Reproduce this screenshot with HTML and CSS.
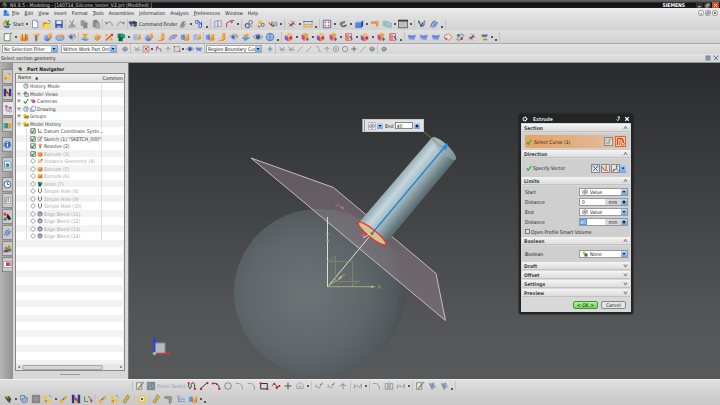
FILE: index.html
```html
<!DOCTYPE html>
<html lang="en">
<head>
<meta charset="utf-8">
<title>NX 8.5 - Modeling</title>
<link rel="stylesheet" href="styles.css">
</head>
<body>
<svg class="sprite" aria-hidden="true">
<defs>
<linearGradient id="gB" x1="0" x2="1" y2="1"><stop stop-color="#b9d2ff"/><stop offset="1" stop-color="#2350c8"/></linearGradient>
<linearGradient id="gO" x1="0" x2="1" y2="1"><stop stop-color="#ffe09a"/><stop offset="1" stop-color="#e0690a"/></linearGradient>
</defs>
<symbol id="logo" viewBox="0 0 12 12"><circle cx="5" cy="4" r="2.6" fill="#2b67d8"/><path d="M2 10V7l4-1 5 2v2z" fill="#3d7be6"/><path d="M7 3l3 1v3l-3-1z" fill="#8bb4ff"/></symbol>
<symbol id="swirl" viewBox="0 0 12 12"><path d="M6 2a4 4 0 0 0-4 5" fill="none" stroke="#e8a020" stroke-width="2"/><path d="M2.500 8a4 4 0 0 0 6 1" fill="none" stroke="#2a5fc8" stroke-width="2"/><path d="M4 4l5-3-1 4 3 2-5 2z" fill="#2d9c4a"/><circle cx="6" cy="6" r="1.300" fill="#d8382a"/></symbol>
<symbol id="new" viewBox="0 0 12 12"><path d="M3 1.500h4.500l2 2v7H3z" fill="#fff" stroke="#7888b8"/><path d="M7.500 1.500v2h2" fill="none" stroke="#7888b8"/></symbol>
<symbol id="open" viewBox="0 0 12 12"><path d="M1 4h4l1 1h4v5H1z" fill="#d8960e"/><path d="M3 6h8l-2 5H1z" fill="#ffd45a"/><path d="M7 1.500q3 0 3 2.500" fill="none" stroke="#5878c8"/></symbol>
<symbol id="save" viewBox="0 0 12 12"><path d="M1.500 1.500h9v9h-9z" fill="#3c56a8"/><path d="M3 2h6v4H3z" fill="#dde6fa"/><path d="M4 8h4v2.500H4z" fill="#a8b4d8"/></symbol>
<symbol id="cut" viewBox="0 0 12 12"><path d="M8 1L5 8M3 2l4 5" stroke="#8c8c8c" stroke-width="1.200"/><circle cx="4" cy="9" r="1.500" fill="none" stroke="#777"/><circle cx="8" cy="8.500" r="1.500" fill="none" stroke="#777"/></symbol>
<symbol id="copy" viewBox="0 0 12 12"><path d="M2 1.500h5v7H2z" fill="#999"/><path d="M5 4h5v7H5z" fill="#888" stroke="#aaa" stroke-width=".5"/></symbol>
<symbol id="paste" viewBox="0 0 12 12"><path d="M2 2h7v8H2z" fill="#8f8f8f"/><path d="M4 1h3v2H4z" fill="#777"/><path d="M5.500 5h5v6h-5z" fill="#a8a8a8" stroke="#888" stroke-width=".5"/></symbol>
<symbol id="undo" viewBox="0 0 12 12"><path d="M3 5q6-4 7 3" fill="none" stroke="#8d8d8d" stroke-width="1.200"/><path d="M1 3l1 4 3-2z" fill="#8d8d8d"/></symbol>
<symbol id="redo" viewBox="0 0 12 12"><path d="M9 5Q3 1 2 8" fill="none" stroke="#8d8d8d" stroke-width="1.200"/><path d="M11 3l-1 4-3-2z" fill="#8d8d8d"/></symbol>
<symbol id="bino" viewBox="0 0 12 12"><path d="M1 3h5l1-1 4 2-1 4-2 1-1-3-3 1-3-2z" fill="#3c424c"/><circle cx="4" cy="7" r="2" fill="#5c7ca8"/><circle cx="8.500" cy="7.500" r="2" fill="#4a5868"/></symbol>
<symbol id="mac" viewBox="0 0 12 12"><path d="M2 10l2-6 3-2 2 1-2 3 3-1-2 4-2 2z" fill="#a0a098"/><path d="M4 9l3-5" stroke="#666"/></symbol>
<symbol id="info" viewBox="0 0 12 12"><path d="M2 2h3v3H2zM6 6h3v4H6z" fill="#fff" stroke="#2a48c8"/><path d="M5 2l3 4M9 3v6" stroke="#2a48c8"/></symbol>
<symbol id="pages" viewBox="0 0 12 12"><path d="M2 3l4-1v7l-4 1z" fill="#d0e4f0" stroke="#6c90a8" stroke-width=".8"/><path d="M6 2h4v7H6z" fill="#e8dce8" stroke="#9a80a0" stroke-width=".8"/></symbol>
<symbol id="meas" viewBox="0 0 12 12"><path d="M2 10V5l5-3h4" fill="none" stroke="#d03a28" stroke-width="1.200"/><circle cx="8" cy="4" r="1.200" fill="#4068c8"/></symbol>
<symbol id="loops" viewBox="0 0 12 12"><circle cx="4" cy="8" r="2.500" fill="none" stroke="#3d66c0" stroke-width="1.300"/><circle cx="8" cy="4" r="2.200" fill="none" stroke="#7a88b0" stroke-width="1.300"/><path d="M7 6l3 4" stroke="#e8a030" stroke-width="1.500"/></symbol>
<symbol id="gear" viewBox="0 0 12 12"><circle cx="5" cy="4" r="2.500" fill="#f0c030"/><circle cx="8" cy="7" r="2.500" fill="#6884b8"/><circle cx="8" cy="7" r="1" fill="#fff"/><path d="M2 8l3 2" stroke="#d05a28" stroke-width="1.500"/></symbol>
<symbol id="rgb" viewBox="0 0 12 12"><path d="M1 4l3 4 1-5" fill="none" stroke="#d02a2a" stroke-width="1.200"/><circle cx="6" cy="8" r="1.500" fill="#30a040"/><circle cx="9" cy="6" r="2" fill="none" stroke="#506cb8"/></symbol>
<symbol id="dim" viewBox="0 0 12 12"><path d="M2 9l7-6M2 5l5 5M5 2l5 5" stroke="#c84858"/><path d="M4 8l4-3" stroke="#4c58a8" stroke-width="2"/></symbol>
<symbol id="rule" viewBox="0 0 12 12"><path d="M1 3h10M1 2v3M11 2v3" stroke="#5468a8"/><path d="M1 6.500h10v3H1z" fill="#f0cf8a" stroke="#b88838" stroke-width=".7"/></symbol>
<symbol id="fit" viewBox="0 0 12 12"><path d="M1.500 1.500h9v9h-9z" fill="#f4f4ff" stroke="#405cb8"/><path d="M3 3h2v2H3zM7 3h2v2H7zM3 7h2v2H3zM7 7h2v2H7z" fill="#d86a28"/></symbol>
<symbol id="orient" viewBox="0 0 12 12"><path d="M2 7q0-4 4-4l3-1-1 3q-4 0-3 4z" fill="#777"/><path d="M4 8q4 2 6-1" fill="none" stroke="#666" stroke-width="2"/></symbol>
<symbol id="cube" viewBox="0 0 12 12"><path d="M1.500 4L4 1.500h7L8.500 4z" fill="#b8ccff"/><path d="M1.500 4h7v7h-7z" fill="#5c84e0"/><path d="M8.500 4L11 1.500V8l-2.500 3z" fill="#2848a8"/></symbol>
<symbol id="plate" viewBox="0 0 12 12"><path d="M1 3l9-1v6L7 10V6L1 6z" fill="#e09a58"/></symbol>
<symbol id="clip" viewBox="0 0 12 12"><path d="M1 2l7 3v6L1 8z" fill="#8cc8a8"/><path d="M3 2l8 3v5L8 9" fill="#a8c4e8" stroke="#6890b8" stroke-width=".7"/></symbol>
<symbol id="win" viewBox="0 0 12 12"><path d="M.5 1.500h11v9H.5z" fill="#bdbfb8" stroke="#555"/><path d="M0 1h12v2H0z" fill="#3c3c3c"/></symbol>
<symbol id="sheet" viewBox="0 0 12 12"><path d="M1.500 2h6l3-1-2 2v7.500h-7z" fill="#fff" stroke="#587858"/></symbol>
<symbol id="wcs" viewBox="0 0 12 12"><path d="M5 4l5 1-2 4-4 1z" fill="url(#gB)"/><path d="M2 2l3 7 2-5" fill="none" stroke="#333"/><path d="M2 2v3" stroke="#20a040" stroke-width="1.500"/><path d="M8 2h2v2H8z" fill="#d84040"/></symbol>
<symbol id="wcs2" viewBox="0 0 12 12"><path d="M4 2l7 2-3 5-4 2z" fill="url(#gB)"/><path d="M2 10l2-6 4-2" fill="none" stroke="#555"/></symbol>
<symbol id="extr" viewBox="0 0 12 12"><path d="M1 3l5-1 5 1v7l-5 1-5-1z" fill="url(#gO)"/><path d="M4 2.500v8M8 2.500v8" stroke="#b84c08"/><path d="M6 1v5" stroke="#fff2a0"/></symbol>
<symbol id="rev" viewBox="0 0 12 12"><path d="M1 3q5-3 10 0L8 6v4H5V6z" fill="url(#gO)"/><path d="M6 4v7" stroke="#3858c0" stroke-width="1.500"/></symbol>
<symbol id="blk" viewBox="0 0 12 12"><circle cx="5" cy="7" r="4" fill="url(#gB)"/><path d="M5 2l5-1 1 6-4 2z" fill="url(#gO)"/></symbol>
<symbol id="dsc" viewBox="0 0 12 12"><ellipse cx="6" cy="7" rx="5" ry="3.500" fill="#8fb0e8" stroke="#5070b0" stroke-width=".6"/><path d="M3 5l4-3 4 2-3 3z" fill="url(#gO)"/></symbol>
<symbol id="hole" viewBox="0 0 12 12"><path d="M1 5l5-3 5 4-5 4z" fill="#b4cce8" stroke="#6888a8" stroke-width=".6"/><circle cx="5" cy="6" r="2" fill="#3f64b8"/><path d="M7 5l2-3 2 3z" fill="#e88828"/></symbol>
<symbol id="datum" viewBox="0 0 12 12"><path d="M2 2h8L7 5l3 2H2l3-2z" fill="#e8a838"/><path d="M1 9l4-2 6 2-4 2z" fill="#6c98d0"/></symbol>
<symbol id="diam" viewBox="0 0 12 12"><path d="M1 6l5-4 5 3-4 4z" fill="url(#gO)"/><path d="M3 8l3 2 4-3" fill="none" stroke="#c06020"/></symbol>
<symbol id="inst" viewBox="0 0 12 12"><path d="M2 10l8-7" stroke="#d03828" stroke-width="1.300"/><circle cx="3" cy="4" r="1.700" fill="#e8b030"/><path d="M7 7h3v3H7z" fill="#e8b030"/><path d="M8 2h3v3H8z" fill="#d04838"/></symbol>
<symbol id="unite" viewBox="0 0 12 12"><path d="M2 2h6v5H2z" fill="#187848"/><circle cx="8" cy="5" r="3" fill="#20a070"/><path d="M3 6h5v5H3z" fill="#0f5c50"/></symbol>
<symbol id="pair" viewBox="0 0 12 12"><path d="M1 4l4-2 2 2v6H2z" fill="#9abcf0"/><path d="M6 3l4-1 1 6-4 2z" fill="url(#gO)"/></symbol>
<symbol id="bend" viewBox="0 0 12 12"><path d="M6 1h4v7q-1 3-8 3V8q4 0 4-3z" fill="url(#gO)"/><path d="M2 9q5 0 7-3" fill="none" stroke="#fff0a0"/></symbol>
<symbol id="sweep" viewBox="0 0 12 12"><path d="M1 8q3-6 10-4L8 8Q4 7 3 10z" fill="#a8bce8" stroke="#7060a8" stroke-width=".7"/><path d="M4 7l5-3" stroke="#d85848"/></symbol>
<symbol id="push" viewBox="0 0 12 12"><path d="M1 4l5-2v8l-5-1z" fill="#6c9ce8"/><path d="M5 3l6-1v8l-6 1z" fill="url(#gO)"/><path d="M5 4v5" stroke="#2858b8"/></symbol>
<symbol id="layer" viewBox="0 0 12 12"><path d="M1 4l6-3 4 3-6 3z" fill="#ffd068"/><path d="M1 7l6-2 4 2-6 4z" fill="#58a0e0"/><path d="M3 5l6-2" stroke="#e05828"/></symbol>
<symbol id="eye" viewBox="0 0 12 12"><path d="M0 6q6-7 12 0-6 6-12 0z" fill="#a8c0e0" stroke="#6080b8" stroke-width=".6"/><circle cx="6" cy="6" r="2.500" fill="#2850a8"/><circle cx="6" cy="5" r=".8" fill="#e84830"/></symbol>
<symbol id="globe" viewBox="0 0 12 12"><circle cx="6" cy="6" r="4.500" fill="#b8d4f8" stroke="#3f6cb8"/><path d="M1.500 6h9M6 1.500v9M3 3q3 2 6 0M3 9q3-2 6 0" fill="none" stroke="#4c74b8" stroke-width=".8"/></symbol>
<symbol id="face" viewBox="0 0 12 12"><path d="M1 4l4-3 5 2v6l-4 2-5-2z" fill="url(#gO)"/><path d="M1 4l4 2v5L1 9z" fill="#8858c8"/><path d="M5 6l5-3" stroke="#fff" stroke-width=".8"/><circle cx="8" cy="7" r="1.800" fill="#d82870"/></symbol>
<symbol id="face2" viewBox="0 0 12 12"><path d="M2 3l5-2 3 2-1 7-5 1-2-3z" fill="#f0a040"/><path d="M2 3l4 3-1 4-3-2z" fill="#c048a8"/><path d="M7 7l4 1-2 3z" fill="#3858d0"/></symbol>
<symbol id="face3" viewBox="0 0 12 12"><path d="M2 2h7v8H2z" fill="#f4d0dc" stroke="#c8588c"/><path d="M2 2l4 2v7l-4-2z" fill="#e8884c"/><path d="M7 5l3 4" stroke="#4454b0" stroke-width="1.500"/></symbol>
<symbol id="srf" viewBox="0 0 12 12"><path d="M1 3q5 2 10 0L9 10Q6 8 2 9z" fill="#8aa6ec"/><path d="M1 5q5 2 9 0M4 4l1 5M7 4v5" fill="none" stroke="#4c66bc" stroke-width=".7"/></symbol>
<symbol id="srf2" viewBox="0 0 12 12"><path d="M2 4l5-2 4 4-4 4-5-2z" fill="#f0e0d8" stroke="#c87850"/><circle cx="4" cy="8" r="1" fill="#3c5cb8"/></symbol>
<symbol id="srf3" viewBox="0 0 12 12"><path d="M2 9l5-7 4 2-5 6z" fill="#c8ccd8" stroke="#687088" stroke-width=".8"/><circle cx="4" cy="4" r="1.700" fill="#3c8450"/><circle cx="8" cy="8" r="1.700" fill="#b04848"/></symbol>
<symbol id="srf4" viewBox="0 0 12 12"><path d="M1 4h8v4H1z" fill="#f2d46a"/><path d="M3 3h8l-2 3H4z" fill="#5470c0"/><path d="M5 8h5v2H5z" fill="#7f8fb8"/></symbol>
<symbol id="tiny" viewBox="0 0 12 12"><path d="M2 3l4 3 4-3M6 6v4" fill="none" stroke="#888"/><circle cx="4" cy="7" r="1.300" fill="#9a9a9a"/><circle cx="9" cy="7" r="1.300" fill="#799a79"/></symbol>
<symbol id="grid" viewBox="0 0 12 12"><path d="M1.500 1.500h9v9h-9z" fill="#f0d8d8" stroke="#a86c6c"/><path d="M4 4l5 5M9 3L4 8" stroke="#c83838" stroke-width="1.300"/></symbol>
<symbol id="hook" viewBox="0 0 12 12"><path d="M2 9V3l4 3h3v4" fill="none" stroke="#7858a0" stroke-width="1.200"/><circle cx="4" cy="3" r="1.300" fill="#c84848"/></symbol>
<symbol id="rect" viewBox="0 0 12 12"><path d="M2 2.500h8v7H2z" fill="none" stroke="#888"/><path d="M1 1.500h2v2H1zM9 8.500h2v2H9z" fill="#c44"/></symbol>
<symbol id="line" viewBox="0 0 12 12"><path d="M2 10l8-8" stroke="#888"/></symbol>
<symbol id="curve" viewBox="0 0 12 12"><path d="M3 2h2q2 0 2 4t3 4" fill="none" stroke="#888"/></symbol>
<symbol id="circ" viewBox="0 0 12 12"><circle cx="6" cy="6" r="4" fill="none" stroke="#777"/></symbol>
<symbol id="circd" viewBox="0 0 12 12"><circle cx="6" cy="6" r="4" fill="none" stroke="#888"/><circle cx="6" cy="6" r="1.300" fill="#b66"/></symbol>
<symbol id="plus" viewBox="0 0 12 12"><path d="M6 2v8M2 6h8" stroke="#555" stroke-width="1.200"/></symbol>
<symbol id="star" viewBox="0 0 12 12"><path d="M6 2v8M2 6l4-2 4 2" fill="none" stroke="#888"/></symbol>
<symbol id="blob" viewBox="0 0 12 12"><path d="M2 5l4-3 4 2v4l-4 2-3-1z" fill="#8c9298"/><path d="M4 6l4-2" stroke="#c4c8cc"/></symbol>
<symbol id="bdot" viewBox="0 0 12 12"><circle cx="6" cy="6" r="2.500" fill="#5898b8"/><path d="M6 1v10M2 6h8" stroke="#88b8cc"/></symbol>
<symbol id="dots" viewBox="0 0 12 12"><path d="M2 9L10 2" stroke="#333" stroke-width="1.200"/><circle cx="2.500" cy="9.500" r="1.400" fill="#d02020"/><circle cx="10" cy="2.500" r="1.400" fill="#d02020"/></symbol>
<symbol id="arc" viewBox="0 0 12 12"><path d="M1.500 3Q9 1 10 9" fill="none" stroke="#444" stroke-width="1.200"/><circle cx="2" cy="3" r="1.300" fill="#d02020"/><circle cx="7" cy="4" r="1.200" fill="#d02020"/><circle cx="10" cy="9.500" r="1.300" fill="#d02020"/></symbol>
<symbol id="prof" viewBox="0 0 12 12"><path d="M2 2v5q1 4 3 1V4q2-4 4 0v5" fill="none" stroke="#444" stroke-width="1.200"/><circle cx="2" cy="2.500" r="1.200" fill="#d02020"/><circle cx="9.500" cy="9.500" r="1.300" fill="#d02020"/></symbol>
<symbol id="fil" viewBox="0 0 12 12"><path d="M1 3h3q5 0 5 7" fill="none" stroke="#a08888"/></symbol>
<symbol id="rct" viewBox="0 0 12 12"><path d="M2 3h8v6.500H2z" fill="none" stroke="#333" stroke-width="1.200"/><circle cx="2" cy="3" r="1.400" fill="#d02020"/><circle cx="10" cy="9.500" r="1.400" fill="#d02020"/></symbol>
<symbol id="spl" viewBox="0 0 12 12"><path d="M1 6l3-3 3 4 4-1" fill="none" stroke="#444"/><circle cx="4" cy="3.500" r="1.300" fill="#d02020"/><circle cx="7" cy="8" r="1.500" fill="#d02020"/><circle cx="10" cy="6" r="1.200" fill="#d02020"/></symbol>
<symbol id="off" viewBox="0 0 12 12"><path d="M2 9V5q4-6 8 0v4z" fill="none" stroke="#a0a0a0"/><path d="M4 7.500q2-4 4 0z" fill="none" stroke="#aaa"/></symbol>
<symbol id="trim" viewBox="0 0 12 12"><path d="M2 4l4 5 4-7M1 7h3" fill="none" stroke="#9c9c9c"/><path d="M7 5l3-2" stroke="#b87848" stroke-width="1.300"/></symbol>
<symbol id="cnst" viewBox="0 0 12 12"><path d="M1 8l4-3 2 3 4-5M2 4v5M10 4v5" fill="none" stroke="#8f9890"/></symbol>
<symbol id="csys" viewBox="0 0 12 12"><path d="M3 1v8h7M3 9l6-5" fill="none" stroke="#4c7858" stroke-width="1.200"/><path d="M1 3h3M8 7v3" stroke="#905068"/></symbol>
<symbol id="mir" viewBox="0 0 12 12"><path d="M1.500 3h3v7h-3zM7.500 3h3v7h-3z" fill="none" stroke="#8d8d95"/><path d="M6 1v10" stroke="#8a8aa8"/></symbol>
<symbol id="pal" viewBox="0 0 12 12"><path d="M2 2h8v8H2z" fill="#f4f4f0" stroke="#888" stroke-width=".8"/><path d="M3 3h2v6H3z" fill="#8898a8"/><path d="M6 3h2v2H6z" fill="#d05048"/><path d="M6 6h2v2H6z" fill="#58a060"/></symbol>
<symbol id="skt" viewBox="0 0 12 12"><path d="M2 2h6v8H2z" fill="#e8e8e0" stroke="#7a7c78"/><path d="M4 9l5-6" stroke="#7c6c48" stroke-width="1.400"/><path d="M8 1h3v3z" fill="#98a858"/></symbol>
<symbol id="fin" viewBox="0 0 12 12"><path d="M1 1h10v10H1z" fill="#7c8c94"/><path d="M3 3h2v2H3zM7 5h2v2H7zM4 7h2v2H4z" fill="#9aa8ae"/></symbol>
<symbol id="plane" viewBox="0 0 12 12"><path d="M2 3l6-1 3 5-5 4z" fill="#a0aac8"/><path d="M3 3l4 5M8 2L5 9" stroke="#6e7890"/></symbol>
<symbol id="key" viewBox="0 0 12 12"><path d="M2 4l5-2 3 4-2 5-3-3z" fill="#50504c"/><path d="M1 3l4-1 2 3z" fill="#e8b020"/></symbol>
<symbol id="cubes" viewBox="0 0 12 12"><path d="M1 2h4v4H1zM6 6h4v4H6z" fill="#f4c440"/><path d="M2 7h3v3H2z" fill="#d89018"/><path d="M7 1l3 3" stroke="#5870b0"/></symbol>
<symbol id="blks" viewBox="0 0 12 12"><path d="M2 2h5v5H2z" fill="none" stroke="#4c6cb0"/><path d="M5 5l5-1v5l-4 2-3-2z" fill="#98b4d8" stroke="#506c98" stroke-width=".7"/></symbol>
<symbol id="gray" viewBox="0 0 12 12"><path d="M1 1h10v10H1z" fill="#86868a"/><circle cx="6" cy="6" r="3" fill="#9c9488"/></symbol>
<symbol id="move" viewBox="0 0 12 12"><path d="M2 9l7-6" stroke="#4068c0" stroke-width="1.500"/><path d="M5 4l5-2-1 5zM1 7h4v4H1z" fill="#f0b030"/></symbol>
<symbol id="rcube" viewBox="0 0 12 12"><path d="M1 1h3v10H1zM8 1h3v10H8z" fill="#2038a0"/><path d="M4 2l4 5v4L4 6z" fill="#d83020"/><path d="M4 8h3v3H4z" fill="#e8b820"/></symbol>
<symbol id="swap" viewBox="0 0 12 12"><path d="M2 3v6h4" fill="none" stroke="#508850" stroke-width="1.200"/><path d="M6 3q4 1 4 6" fill="none" stroke="#c04858" stroke-width="1.200"/><path d="M8 7h4l-2 4z" fill="#c04858"/></symbol>
<symbol id="link" viewBox="0 0 12 12"><path d="M6 1l3 2-2 4-3-2zM3 6l3 2-2 3-3-2z" fill="#ccb84c" stroke="#8c7c28" stroke-width=".7"/></symbol>
<symbol id="pipe" viewBox="0 0 12 12"><path d="M1 3h7q2 0 1 4l-1 4H6V6L1 5z" fill="#90a090" stroke="#607068" stroke-width=".6"/></symbol>
<symbol id="ydia" viewBox="0 0 12 12"><path d="M6 1l5 3v5l-5 2-5-2V4z" fill="#f4c83c"/><circle cx="6" cy="6" r="2.600" fill="#fff"/><circle cx="6" cy="6" r="1.500" fill="#3058b0"/></symbol>
<symbol id="tree" viewBox="0 0 12 12"><path d="M3 3v6h5M3 6h5" fill="none" stroke="#7888b0"/><path d="M1 2h4v2H1zM7 5h4v2H7zM7 8h4v2H7z" fill="#98a8d8"/></symbol>
<symbol id="part" viewBox="0 0 12 12"><path d="M3 3v6h5M3 5h5" fill="none" stroke="#806890"/><circle cx="3" cy="3" r="1.800" fill="#c868a0"/><circle cx="8.500" cy="5" r="1.700" fill="#a068b0"/><circle cx="8.500" cy="9" r="1.700" fill="#fff" stroke="#a05890"/></symbol>
<symbol id="clock" viewBox="0 0 12 12"><circle cx="6" cy="6" r="4.600" fill="#e8f0f4" stroke="#4c6880" stroke-width="1.300"/><path d="M6 3v3h2.500" fill="none" stroke="#345"/></symbol>
<symbol id="web" viewBox="0 0 12 12"><path d="M2 1.500h6l2.500 2v7H2z" fill="#eaf4fa" stroke="#5890b8"/><circle cx="6" cy="7" r="2.500" fill="#38a068"/><path d="M4 6q3-2 4 1" fill="none" stroke="#2c70c0" stroke-width="1.400"/></symbol>
<symbol id="views" viewBox="0 0 12 12"><circle cx="5" cy="5" r="4" fill="#4ca890"/><path d="M4 5h7v6H4z" fill="#d8c8d0" stroke="#a04c70"/></symbol>
<symbol id="cam" viewBox="0 0 12 12"><path d="M1 2h6v6H1z" fill="#e4a8c0"/><circle cx="7.500" cy="7" r="3.500" fill="#c85080"/><circle cx="7.500" cy="7" r="1.800" fill="#6078c8"/></symbol>
<symbol id="drw" viewBox="0 0 12 12"><path d="M3.500 1.500h8v7h-8z" fill="#fff" stroke="#5870c0" stroke-width="1.300"/><path d="M1 4v7h8" fill="none" stroke="#7088c8" stroke-width="1.300"/></symbol>
<symbol id="fold" viewBox="0 0 12 12"><path d="M1 2h4l1 2h5v6H1z" fill="#f4bc28"/><path d="M3 6h9l-1 5H2z" fill="#c88a10"/><path d="M7 7h4v3H7z" fill="#5c88b0"/></symbol>
<symbol id="u" viewBox="0 0 12 12"><path d="M3 1v7q3 5 6 0V1" fill="none" stroke="#555" stroke-width="1.600"/></symbol>
<symbol id="edge" viewBox="0 0 12 12"><circle cx="6" cy="6" r="5" fill="#5c80d0"/><path d="M3 4h6v5q-5 1-6-1z" fill="#f0a868"/><path d="M2 3l6-1 3 4" fill="none" stroke="#6c70c8"/></symbol>
<symbol id="box" viewBox="0 0 12 12"><path d="M1.500 1.500h9v9h-9z" fill="#fff" stroke="#333" stroke-width="1.300"/><path d="M3 6l2 3 4-6" fill="none" stroke="#20a030" stroke-width="2.400"/></symbol>
<symbol id="dia" viewBox="0 0 12 12"><path d="M6 1l5 5-5 5-5-5z" fill="#fff" stroke="#666" stroke-width="1.200"/></symbol>
<symbol id="chk" viewBox="0 0 12 12"><path d="M1.500 6.500l3 4L10.500 2" fill="none" stroke="#19b52c" stroke-width="2.500"/></symbol>
<symbol id="books" viewBox="0 0 12 12"><path d="M1 4h3v7H1z" fill="#38b070"/><path d="M4 3h3v8H4z" fill="#2c88d0"/><path d="M7 3h4v8H7z" fill="#f0a020"/><path d="M1 4l2-2h7l1 2z" fill="#f8d880"/></symbol>
<symbol id="i" viewBox="0 0 12 12"><circle cx="6" cy="6" r="4.500" fill="#2d78c8"/><path d="M6 5v4M6 2.500v1.500" stroke="#fff" stroke-width="1.500"/><path d="M1 10q-1-7 5-9" fill="none" stroke="#78b0e0"/></symbol>
<symbol id="spec" viewBox="0 0 12 12"><path d="M1 1h3v3H1z" fill="#d828a0"/><path d="M1 3h4v2H1z" fill="#e83020"/><path d="M1 5h4v2H1z" fill="#f0d820"/><path d="M1 7h4v2H1z" fill="#30c040"/><path d="M1 9h4v2H1z" fill="#2850d8"/><path d="M6 2l5 7-3 2-3-4z" fill="#222"/></symbol>
<symbol id="ppl" viewBox="0 0 12 12"><circle cx="8" cy="3.500" r="2" fill="#c88c28"/><path d="M5 10V6h6v4z" fill="#30903c"/><circle cx="4" cy="5.500" r="2" fill="#b87048"/><path d="M1 11V8h6v3z" fill="#7040b0"/></symbol>
<symbol id="flag" viewBox="0 0 12 12"><path d="M1 2h10v8H1z" fill="#fff" stroke="#999"/><path d="M4 3h6v5H4z" fill="#e05848"/><path d="M5 4h2v4H5z" fill="#3c64c0"/></symbol>
<symbol id="vec" viewBox="0 0 12 12"><path d="M2 2l8 8M10 2l-8 8" stroke="#2c50b8" stroke-width="1.500"/><path d="M1 1h3v3H1zM8 1h3v3H8z" fill="#6888d0"/></symbol>
<symbol id="vec2" viewBox="0 0 12 12"><path d="M1 3q1 7 9 7M7 1v7" fill="none" stroke="#d8482c" stroke-width="1.800"/><path d="M5 3l2-3 2 3z" fill="#e0a020"/></symbol>
<symbol id="vec3" viewBox="0 0 12 12"><path d="M1 10l7-4V1M8 6l3 5" fill="none" stroke="#555" stroke-width="1.300"/><path d="M1 11l1-4 3 3z" fill="#d03020"/><circle cx="8" cy="2" r="1.500" fill="#3c8450"/></symbol>
<symbol id="crv" viewBox="0 0 12 12"><path d="M2 11V2M2 2h4q4 1 4 5" fill="none" stroke="#d84824" stroke-width="1.800"/><path d="M5 11q-1-6 2-6" fill="none" stroke="#e06a3c" stroke-width="1.400"/><circle cx="9" cy="9" r="2" fill="#fbe8d0" stroke="#c03818"/></symbol>
<symbol id="val" viewBox="0 0 12 12"><path d="M1 4l5-3 5 2v5l-5 3-5-2z" fill="#c8ccd4" stroke="#707888"/><circle cx="6" cy="6" r="2" fill="#c87070"/></symbol>
<symbol id="none" viewBox="0 0 12 12"><circle cx="4" cy="4" r="3" fill="#d8c030"/><path d="M5 5h6v6H5z" fill="#10804c"/></symbol>
<symbol id="dn" viewBox="0 0 8 8"><path d="M1 2h6L4 6z" fill="#0b1d3c"/></symbol>
<symbol id="ud" viewBox="0 0 8 8"><path d="M4 .5L7.500 4 4 7.500.5 4z" fill="#0b1d3c"/></symbol>
<symbol id="up" viewBox="0 0 12 12"><path d="M2 10l4-7 4 7" fill="none" stroke="#444" stroke-width="1.600"/></symbol>
<symbol id="dw" viewBox="0 0 12 12"><path d="M2 3l4 7 4-7" fill="none" stroke="#444" stroke-width="1.600"/></symbol>
<symbol id="min" viewBox="0 0 12 12"><path d="M2 9h7" stroke="currentColor" stroke-width="2"/></symbol>
<symbol id="rst" viewBox="0 0 12 12"><path d="M2 5h5v5H2zM5 5V2h5v5H7" fill="none" stroke="currentColor" stroke-width="1.500"/></symbol>
<symbol id="x" viewBox="0 0 12 12"><path d="M2.500 2.500l7 7M9.500 2.500l-7 7" stroke="currentColor" stroke-width="2.200"/></symbol>
<symbol id="rot" viewBox="0 0 12 12"><path d="M8 2v5q-3 4-5 0M5 2h5" fill="none" stroke="currentColor" stroke-width="1.800"/></symbol>
<symbol id="cog" viewBox="0 0 12 12"><circle cx="6" cy="6" r="3.500" fill="none" stroke="#fff" stroke-width="2.600" stroke-dasharray="2.200 .8"/></symbol>
</svg>

<header class="title"><svg class="s"><use href="#swirl"/></svg><h1>NX 8.5 - Modeling - [140714_Silicone_tester_V2.prt (Modified) ]</h1><strong>SIEMENS</strong>
<button title="Minimize"><svg><use href="#min"/></svg></button><button title="Restore"><svg><use href="#rst"/></svg></button><button class="close" title="Close"><svg><use href="#x"/></svg></button></header>

<nav class="menu"><svg class="i"><use href="#logo"/></svg><a href="#"><u>F</u>ile</a><a href="#"><u>E</u>dit</a><a href="#"><u>V</u>iew</a><a href="#">In<u>s</u>ert</a><a href="#">F<u>o</u>rmat</a><a href="#"><u>T</u>ools</a><a href="#"><u>A</u>ssemblies</a><a href="#"><u>I</u>nformation</a><a href="#">Ana<u>l</u>ysis</a><a href="#"><u>P</u>references</a><a href="#">Wind<u>o</u>w</a><a href="#"><u>H</u>elp</a>
<span class="docs"><button title="Minimize document"><svg><use href="#min"/></svg></button><button title="Restore document"><svg><use href="#rst"/></svg></button><button title="Close document"><svg><use href="#x"/></svg></button></span></nav>

<div class="bar">
<button class="txt"><svg class="i"><use href="#swirl"/></svg>Start<i class="d"></i></button>
<button title="New"><svg><use href="#new"/></svg></button><button title="Open"><svg><use href="#open"/></svg></button><button title="Save"><svg><use href="#save"/></svg></button><i class="sep n"></i>
<button title="Cut"><svg><use href="#cut"/></svg></button><button title="Copy"><svg><use href="#copy"/></svg></button><button title="Paste"><svg><use href="#paste"/></svg></button><i class="sep n"></i>
<button title="Undo"><svg><use href="#undo"/></svg></button><button title="Redo"><svg><use href="#redo"/></svg></button><i class="sep n"></i>
<button class="txt"><svg class="i"><use href="#bino"/></svg>Command Finder</button>
<button title="Macro"><svg><use href="#mac"/></svg></button><i class="d"></i><button title="Object Information"><svg><use href="#info"/></svg></button><i class="d low"></i><i class="sep"></i>
<button title="Copy Face"><svg><use href="#pages"/></svg></button><button title="Path"><svg><use href="#meas"/></svg></button><i class="d"></i><i class="sep"></i>
<button title="Constraints"><svg><use href="#loops"/></svg></button><button title="Update"><svg><use href="#gear"/></svg></button><button title="Analyze"><svg><use href="#rgb"/></svg></button><i class="d"></i><i class="sep"></i>
<button title="Angle"><svg><use href="#dim"/></svg></button><i class="d"></i><button title="Distance"><svg><use href="#rule"/></svg></button><i class="d low"></i><i class="sep"></i>
<button title="Fit"><svg><use href="#fit"/></svg></button><i class="d"></i><button title="Rotate"><svg><use href="#orient"/></svg></button><i class="d"></i><button title="Shaded"><svg><use href="#cube"/></svg></button><i class="d"></i><button title="Section"><svg><use href="#plate"/></svg></button><button title="Clip"><svg><use href="#clip"/></svg></button><i class="d"></i><button title="Background"><svg><use href="#win"/></svg></button><i class="d"></i><i class="sep"></i>
<button title="Orient WCS"><svg><use href="#wcs"/></svg></button><button title="Move WCS"><svg><use href="#wcs2"/></svg></button><i class="d low"></i><i class="sep"></i>
</div>

<div class="bar">
<button title="Sketch"><svg><use href="#sheet"/></svg></button><i class="d"></i><button title="Extrude"><svg><use href="#extr"/></svg></button><button title="Revolve"><svg><use href="#rev"/></svg></button><button title="Block"><svg><use href="#blk"/></svg></button><button title="Boss"><svg><use href="#dsc"/></svg></button><button title="Hole"><svg><use href="#hole"/></svg></button><i class="sep n"></i>
<button title="Datum"><svg><use href="#datum"/></svg></button><button title="Patch"><svg><use href="#diam"/></svg></button><button title="Instance Geometry"><svg><use href="#inst"/></svg></button><button title="Unite"><svg><use href="#unite"/></svg></button><i class="d"></i>
<button title="Shell"><svg><use href="#pair"/></svg></button><button title="Edge Blend"><svg><use href="#blk"/></svg></button><button title="Flange"><svg><use href="#bend"/></svg></button><button title="Sweep"><svg><use href="#sweep"/></svg></button><button title="Push"><svg><use href="#push"/></svg></button><button title="Pull"><svg><use href="#pair"/></svg></button><i class="sep n"></i>
<button title="Draft Body"><svg><use href="#push"/></svg></button><button title="Bend"><svg><use href="#bend"/></svg></button><button title="Thread"><svg><use href="#hole"/></svg></button><button title="Layers"><svg><use href="#layer"/></svg></button><button title="Show"><svg><use href="#eye"/></svg></button><button title="Mesh"><svg><use href="#globe"/></svg></button><i class="d low"></i><i class="sep"></i>
<button title="Move Face"><svg><use href="#face"/></svg></button><i class="d"></i><button title="Pull Face"><svg><use href="#face2"/></svg></button><i class="d"></i><button title="Offset Region"><svg><use href="#face"/></svg></button><button title="Replace Face"><svg><use href="#face2"/></svg></button><i class="d"></i><button title="Resize Face"><svg><use href="#face3"/></svg></button><i class="d"></i><button title="Delete Face"><svg><use href="#face"/></svg></button><i class="d"></i><button title="Pattern Face"><svg><use href="#face2"/></svg></button><button title="Label Face"><svg><use href="#face3"/></svg></button><i class="d low"></i><i class="sep"></i>
<button title="Ruled"><svg><use href="#srf"/></svg></button><button title="Through Curves"><svg><use href="#srf"/></svg></button><button title="Curve Mesh"><svg><use href="#srf"/></svg></button><button title="N-Sided Surface"><svg><use href="#srf2"/></svg></button><button title="Bridge"><svg><use href="#srf3"/></svg></button><button title="Trimmed Sheet"><svg><use href="#dim"/></svg></button><button title="Sew"><svg><use href="#srf4"/></svg></button><i class="d"></i><i class="d low"></i><i class="sep"></i>
</div>

<div class="bar pick">
<label class="sel"><select aria-label="Type filter"><option>No Selection Filter</option></select><svg class="ar"><use href="#dn"/></svg></label>
<label class="sel"><select aria-label="Selection scope"><option>Within Work Part Only</option></select><svg class="ar"><use href="#dn"/></svg></label>
<button title="Reset"><svg><use href="#blob"/></svg></button><i class="sep"></i><button title="Allow"><svg><use href="#tiny"/></svg></button><button title="Grid"><svg><use href="#grid"/></svg></button><i class="d"></i><button title="Chain"><svg><use href="#hook"/></svg></button><button title="Follow"><svg><use href="#star"/></svg></button><button title="Rectangle"><svg><use href="#rect"/></svg></button><i class="d"></i><button title="Visible"><svg><use href="#eye"/></svg></button><button title="Solid"><svg><use href="#srf"/></svg></button><i class="sep"></i>
<label class="sel"><select aria-label="Curve rule"><option>Region Boundary Curv</option></select><svg class="ar"><use href="#dn"/></svg></label>
<button title="Stop"><svg><use href="#bdot"/></svg></button><i class="sep"></i>
<button title="Snap"><svg><use href="#tiny"/></svg></button><button title="Clear"><svg><use href="#tiny"/></svg></button><button title="End Point"><svg><use href="#line"/></svg></button><button title="Mid Point"><svg><use href="#line"/></svg></button><button title="Control Point"><svg><use href="#curve"/></svg></button><button title="Intersection"><svg><use href="#star"/></svg></button><button title="Arc Center"><svg><use href="#circd"/></svg></button><button title="Quadrant"><svg><use href="#circ"/></svg></button><button title="Existing Point"><svg><use href="#plus"/></svg></button><button title="On Curve"><svg><use href="#line"/></svg></button><button title="On Face"><svg><use href="#blob"/></svg></button><i class="sep"></i><button title="Facet"><svg><use href="#blob"/></svg></button>
</div>
<p class="prompt">Select section geometry<span><svg><use href="#fin"/></svg><svg><use href="#vec"/></svg></span></p>

<main class="work">
<nav class="tabs">
<button title="Assembly"><svg><use href="#cubes"/></svg></button><button title="Constraint"><svg><use href="#rcube"/></svg></button><button class="on" title="Part"><svg><use href="#part"/></svg></button><button title="Reuse"><svg><use href="#books"/></svg></button>
<button class="gap" title="Help"><svg><use href="#i"/></svg></button><button class="gap" title="Browser"><svg><use href="#web"/></svg></button><button class="gap" title="History"><svg><use href="#clock"/></svg></button><button title="Palette"><svg><use href="#pal"/></svg></button><button title="Materials"><svg><use href="#spec"/></svg></button><button title="Process"><svg><use href="#wcs2"/></svg></button><button title="Roles"><svg><use href="#ppl"/></svg></button><button title="Scenes"><svg><use href="#flag"/></svg></button>
</nav>
<section class="nav">
<h2><svg class="s"><use href="#key"/></svg>Part Navigator</h2>
<div class="list">
<table>
<thead><tr><th>Name<b>▲</b></th><th>Commen</th></tr></thead>
<tbody>
<tr><td><span class="r"><i class="e"></i><svg><use href="#clock"/></svg>History Mode</span></td><td></td></tr>
<tr><td><span class="r"><i class="e">+</i><svg><use href="#views"/></svg>Model Views</span></td><td></td></tr>
<tr><td><span class="r"><i class="e">+</i><svg><use href="#chk"/></svg><svg><use href="#cam"/></svg>Cameras</span></td><td></td></tr>
<tr><td><span class="r"><i class="e">+</i><svg><use href="#clock"/></svg><svg><use href="#drw"/></svg>Drawing</span></td><td></td></tr>
<tr><td><span class="r"><i class="e">+</i><svg><use href="#fold"/></svg>Groups</span></td><td></td></tr>
<tr><td><span class="r"><i class="e">−</i><svg><use href="#fold"/></svg>Model History</span></td><td></td></tr>
<tr><td><span class="r c"><svg><use href="#box"/></svg><svg><use href="#csys"/></svg>Datum Coordinate Syste...</span></td><td></td></tr>
<tr><td><span class="r c"><svg><use href="#box"/></svg><svg><use href="#skt"/></svg>Sketch (1) "SKETCH_000"</span></td><td></td></tr>
<tr><td><span class="r c"><svg><use href="#box"/></svg><svg><use href="#rev"/></svg>Revolve (2)</span></td><td></td></tr>
<tr><td><span class="r c off"><svg><use href="#box"/></svg><svg><use href="#extr"/></svg>Extrude (3)</span></td><td></td></tr>
<tr><td><span class="r c off"><svg><use href="#dia"/></svg><svg><use href="#inst"/></svg>Instance Geometry (4)</span></td><td></td></tr>
<tr><td><span class="r c off"><svg><use href="#dia"/></svg><svg><use href="#extr"/></svg>Extrude (5)</span></td><td></td></tr>
<tr><td><span class="r c off"><svg><use href="#dia"/></svg><svg><use href="#extr"/></svg>Extrude (6)</span></td><td></td></tr>
<tr><td><span class="r c off"><svg><use href="#dia"/></svg><svg><use href="#unite"/></svg>Unite (7)</span></td><td></td></tr>
<tr><td><span class="r c off"><svg><use href="#dia"/></svg><svg><use href="#u"/></svg>Simple Hole (8)</span></td><td></td></tr>
<tr><td><span class="r c off"><svg><use href="#dia"/></svg><svg><use href="#u"/></svg>Simple Hole (9)</span></td><td></td></tr>
<tr><td><span class="r c off"><svg><use href="#dia"/></svg><svg><use href="#u"/></svg>Simple Hole (10)</span></td><td></td></tr>
<tr><td><span class="r c off"><svg><use href="#dia"/></svg><svg><use href="#edge"/></svg>Edge Blend (11)</span></td><td></td></tr>
<tr><td><span class="r c off"><svg><use href="#dia"/></svg><svg><use href="#edge"/></svg>Edge Blend (12)</span></td><td></td></tr>
<tr><td><span class="r c off"><svg><use href="#dia"/></svg><svg><use href="#edge"/></svg>Edge Blend (13)</span></td><td></td></tr>
<tr><td><span class="r c off"><svg><use href="#dia"/></svg><svg><use href="#edge"/></svg>Edge Blend (14)</span></td><td></td></tr>
</tbody>
</table>
<div class="rest"></div>
<div class="hs"><b>◂</b><i></i><b>▸</b></div>
</div>
<div class="grip"></div>
</section>

<section class="view">
<svg class="scene" viewBox="129 63 591 316" preserveAspectRatio="xMinYMin slice">
<defs>
<radialGradient id="sph" cx=".42" cy=".52" r=".58"><stop stop-color="#6d7476"/><stop offset=".6" stop-color="#60676a"/><stop offset=".9" stop-color="#525a5d"/><stop offset="1" stop-color="#4a5154"/></radialGradient>
<linearGradient id="cyl" gradientUnits="userSpaceOnUse" x1="393" y1="178" x2="422" y2="202"><stop stop-color="#879ca3"/><stop offset=".3" stop-color="#c3d7dd"/><stop offset=".55" stop-color="#a3b8be"/><stop offset=".85" stop-color="#687b81"/><stop offset="1" stop-color="#52646a"/></linearGradient>
</defs>
<ellipse cx="319.500" cy="292.500" rx="85.500" ry="83.500" fill="url(#sph)"/>
<path d="M251 158L333.500 187.500 436 273.500 445.500 320.500z" fill="#a58f98" fill-opacity=".36" stroke="#cdb9c0"/>
<path d="M327.500 217v70M327.500 287L372 233.500" stroke="#dcdcdc" fill="none"/>
<path d="M327.500 261.500h25V287M335.500 256.500V281.500H360M327.500 261.500l8-5M352 286l7-5" fill="none" stroke="#8d8c66" stroke-width=".7"/>
<path d="M327.500 286.700H373M328 286l11-7" stroke="#aaa774" fill="none"/>
<path d="M371 285.500l5 1.200-5 1.200zM338 279l2-3 3 .5-3 3zM326.500 239.500h2v3h-2z" fill="#b8b478"/>
<path d="M378 285.500l3 3M381 285.500l-3 3M326 233l1.500 2 1.500-2M342 274l1.500 2 1.500-2" stroke="#aaa774" stroke-width=".7" fill="none"/>
<path d="M342 208l17 15" stroke="#9a6077" fill="none" stroke-width=".7"/>
<path d="M339 206l5 1-1 3zM361.500 234.500h4v2.500h-4z" fill="#d0608c"/>
<path d="M336 207v-3l3 2v-3" stroke="#c85a86" stroke-width=".7" fill="none"/>
<path d="M431.500 138C436 133 457 152 456 159L387 242Q374 243 358.500 223z" fill="url(#cyl)"/>
<ellipse cx="444" cy="148.500" rx="16" ry="4.500" transform="rotate(43 444 148.500)" fill="#94a7ac" fill-opacity=".6"/>
<ellipse cx="372" cy="233.500" rx="17.300" ry="4" transform="rotate(39 372 233.500)" fill="#d2c593" stroke="#f0352b" stroke-width="1.300"/>
<path d="M363 238l9-5" stroke="#ddd" stroke-width=".8"/>
<path d="M372 233.500L445.500 146" stroke="#1e86d2" stroke-width="1.400"/>
<path d="M448 143l-6 4 4 3.500z" fill="#1c8ee6"/><circle cx="372" cy="233.500" r="1.500" fill="#8a7a28"/>
<path d="M424 132l18 15" stroke="#94885e" stroke-width=".8"/>
<path d="M155 343h10v10h-10z" fill="#b6b9b9" stroke="#8b8e8e"/>
<path d="M154.500 353V341" stroke="#1c43ff" stroke-width="1.600"/><path d="M152.500 342l2-5 2 5z" fill="#1c43ff"/><path d="M153 333l2 2M155 333l-2 2" stroke="#3348b8" stroke-width=".7"/>
<path d="M155 353.500h13" stroke="#e03a34"/><path d="M167 352l4 1.500-4 1.500zM172 352.500l2 2" fill="#e03a34" stroke="#b33a3a" stroke-width=".6"/><circle cx="154.500" cy="353.500" r="1.800" fill="#9bb8a2"/>
</svg>

<div class="pop"><i></i><button title="Value"><svg><use href="#val"/></svg></button><svg class="ar"><use href="#dn"/></svg><label for="pe">End</label><input id="pe" value="40"><svg class="ar"><use href="#ud"/></svg></div>

<form class="dlg">
<header><svg><use href="#cog"/></svg><h2>Extrude</h2><button type="button" title="Reset"><svg><use href="#rot"/></svg></button><button type="button" title="Close"><svg><use href="#x"/></svg></button></header>
<div class="body">
<h3>Section<svg><use href="#up"/></svg></h3>
<div class="grp"><div class="cur"><svg><use href="#chk"/></svg><span>Select Curve (1)</span><button type="button" title="Sketch Section"><svg><use href="#skt"/></svg></button><button type="button" class="hot" title="Curve"><svg><use href="#crv"/></svg></button></div></div>
<h3>Direction<svg><use href="#up"/></svg></h3>
<div class="grp"><div class="cur vecs"><svg><use href="#chk"/></svg><span>Specify Vector</span><button type="button" title="Reverse Direction"><svg><use href="#vec"/></svg></button><button type="button" title="Vector Dialog"><svg><use href="#vec2"/></svg></button><button type="button" title="Face Normal"><svg><use href="#vec3"/></svg></button><svg class="ar"><use href="#dn"/></svg></div></div>
<h3>Limits<svg><use href="#up"/></svg></h3>
<div class="grp fields">
<label for="f1">Start</label><div class="sel"><svg class="v"><use href="#val"/></svg><select id="f1"><option>Value</option></select><svg class="ar"><use href="#dn"/></svg></div>
<label for="f2">Distance</label><div class="num"><input id="f2" value="0"><span>mm</span><svg class="ar"><use href="#ud"/></svg></div>
<label for="f3">End</label><div class="sel"><svg class="v"><use href="#val"/></svg><select id="f3"><option>Value</option></select><svg class="ar"><use href="#dn"/></svg></div>
<label for="f4">Distance</label><div class="num act"><input id="f4" value="40"><span>mm</span><svg class="ar"><use href="#ud"/></svg></div>
<label class="wide"><input type="checkbox">Open Profile Smart Volume</label>
</div>
<h3>Boolean<svg><use href="#up"/></svg></h3>
<div class="grp fields bool"><label for="f5">Boolean</label><div class="sel"><svg class="v"><use href="#none"/></svg><select id="f5"><option>None</option></select><svg class="ar"><use href="#dn"/></svg></div></div>
<h3>Draft<svg><use href="#dw"/></svg></h3><h3>Offset<svg><use href="#dw"/></svg></h3><h3>Settings<svg><use href="#dw"/></svg></h3><h3>Preview<svg><use href="#dw"/></svg></h3>
<footer><button type="button" class="ok">&lt; OK &gt;</button><button type="button">Cancel</button></footer>
</div>
</form>
</section>
</main>

<div class="bar sk"><i class="sep"></i>
<button title="Sketch Task"><svg><use href="#skt"/></svg></button><button class="txt dis"><svg class="i"><use href="#fin"/></svg>Finish Sketch</button><button title="Profile"><svg><use href="#prof"/></svg></button><button title="Line"><svg><use href="#dots"/></svg></button><button title="Arc"><svg><use href="#arc"/></svg></button><button title="Circle"><svg><use href="#circ"/></svg></button><button title="Fillet"><svg><use href="#fil"/></svg></button><button title="Chamfer"><svg><use href="#fil"/></svg></button><button title="Rectangle"><svg><use href="#rct"/></svg></button><button title="Spline"><svg><use href="#spl"/></svg></button><button title="Point"><svg><use href="#plus"/></svg></button><button title="Offset Curve"><svg><use href="#off"/></svg></button><i class="d"></i><i class="sep"></i>
<button title="Quick Trim"><svg><use href="#trim"/></svg></button><button title="Quick Extend"><svg><use href="#trim"/></svg></button><button title="Corner"><svg><use href="#star"/></svg></button><i class="sep"></i>
<button title="Inferred Dimension"><svg><use href="#cnst"/></svg></button><i class="d"></i><i class="sep"></i><button title="Constraint"><svg><use href="#fil"/></svg></button><button title="Symmetric"><svg><use href="#mir"/></svg></button><button title="Show Constraints"><svg><use href="#cnst"/></svg></button><i class="d"></i><i class="sep"></i>
<button title="Orient"><svg><use href="#skt"/></svg></button><button title="Reattach"><svg><use href="#plane"/></svg></button><button title="Update Model"><svg><use href="#plane"/></svg></button><i class="d low"></i><i class="sep"></i>
</div>
<div class="bar asm">
<button title="Find"><svg><use href="#key"/></svg></button><i class="d"></i><button title="Open Component"><svg><use href="#blks"/></svg></button><button title="Product Outline"><svg><use href="#gray"/></svg></button><button title="Add"><svg><use href="#cubes"/></svg></button><i class="d"></i><button title="Move Component"><svg><use href="#move"/></svg></button><button title="Assembly Constraints"><svg><use href="#rcube"/></svg></button><button title="Replace"><svg><use href="#swap"/></svg></button><i class="sep"></i>
<button title="Show Freedom"><svg><use href="#move"/></svg></button><button title="Exploded Views"><svg><use href="#cubes"/></svg></button><button title="Sequence"><svg><use href="#link"/></svg></button><i class="sep"></i><button title="Clearance"><svg><use href="#ydia"/></svg></button><i class="sep"></i>
<button title="WAVE Link"><svg><use href="#link"/></svg></button><button title="Routing"><svg><use href="#pipe"/></svg></button><button title="Relations"><svg><use href="#tree"/></svg></button><button title="Arrangements"><svg><use href="#push"/></svg></button><i class="d"></i><i class="d low"></i>
</div>
</body>
</html>
```

FILE: styles.css
```css
* { box-sizing: border-box; margin: 0; padding: 0; }
html, body { height: 100%; }
body {
  display: flex; flex-direction: column; overflow: hidden;
  background: #d6d6d6; color: #1c1c1c;
  font: 5px/6px "DejaVu Sans Condensed", "DejaVu Sans", "Liberation Sans", sans-serif;
}
.sprite { position: absolute; width: 0; height: 0; }
svg { display: block; flex: none; }
button, select, input { font: inherit; color: inherit; background: none; border: 0; border-radius: 0; outline: 0; min-width: 0; appearance: none; }
button { display: flex; align-items: center; justify-content: center; flex: none; }
a { color: inherit; text-decoration: none; }
h1, h2, h3 { font-size: 5px; line-height: 6px; }

.title { flex: none; display: flex; align-items: center; height: 8px; padding: 2px 1px 0 2px; background: linear-gradient(#66666a 0, #515155 2px, #111 3px, #1c1c1c 8px); color: #eee; }
.title .s { width: 6px; height: 6px; margin-right: 2px; }
.title h1 { flex: 1; color: #ccc; font-weight: 400; }
.title strong { margin-right: 10px; color: #fff; }
.title button { width: 7px; height: 6px; margin-left: 1px; background: #333; }
.title button svg { width: 5px; height: 5px; }
.title .close { background: #de4a28; }

.menu { flex: none; display: flex; align-items: center; gap: 5px; height: 9px; padding: 0 2px; background: linear-gradient(#ededed, #dedede); }
.menu .i { width: 8px; height: 8px; margin-right: -3px; }
.menu u { text-underline-offset: 0; text-decoration-thickness: 1px; text-decoration-color: #999; }
.docs { display: flex; gap: 1px; margin-left: auto; }
.docs button { width: 6px; height: 6px; border: 1px solid #aaa; border-radius: 2px; background: #eee; color: #444; }
.docs svg { width: 4px; height: 4px; }

.bar { flex: none; display: flex; align-items: center; height: 13px; padding: 0 2px; background: linear-gradient(#e0e0e0, #d2d2d2); }
.bar button { width: 12px; height: 12px; }
.bar button svg { width: 10px; height: 10px; }
.bar .txt { width: auto; gap: 1px; }
.d { flex: none; width: 4px; height: 2px; background: radial-gradient(circle, #555 1px, transparent 1px) center; }
.d.low { align-self: flex-end; margin-bottom: 2px; }
.sep { flex: none; width: 1px; height: 10px; margin: 0 1px; background: #c2c2c2; }
.sep.n { margin: 0; }
.pick { height: 11px; border-top: 1px solid #aaa; background: linear-gradient(#e2e2e2, #d6d6d6); }
.pick button { width: 9px; height: 9px; }
.pick button svg { width: 8px; height: 8px; }
.pick .sel { width: 56px; margin-right: 3px; }

.sel { display: flex; align-items: center; height: 8px; border: 1px solid #a5a5a5; background: #fff; }
.sel select { flex: 1; width: 0; height: 6px; padding-left: 1px; line-height: 6px; }
.sel .v { width: 6px; height: 6px; margin: 0 1px 0 2px; }
.ar { width: 6px; height: 6px; padding: 1px; background: linear-gradient(#b4d6fa, #6ea8e8); }

.prompt { flex: none; display: flex; justify-content: space-between; align-items: center; height: 9px; padding: 0 1px; background: linear-gradient(#e4e4e4, #d4d4d4); border-bottom: 1px solid #999; }
.prompt span { display: flex; gap: 2px; }
.prompt svg { width: 6px; height: 6px; }

.work { flex: 1; min-height: 0; display: flex; }
.tabs { flex: none; width: 13px; padding: 6px 0 0 2px; background: linear-gradient(90deg, #b5b5b5, #929292); display: flex; flex-direction: column; gap: 1px; }
.tabs button { width: 10px; height: 15px; border: 1px solid #8a8a8a; border-right: 0; background: #c9c9c9; }
.tabs button.on { width: 11px; background: #e6e6e6; }
.tabs button.gap { margin-top: 4px; }
.tabs svg { width: 9px; height: 9px; }

.nav { flex: none; width: 116px; display: flex; flex-direction: column; padding: 2px 3px 0 2px; background: #d8d8d8; border-right: 1px solid #777; }
.nav h2 { display: flex; align-items: center; gap: 4px; padding: 0 2px; height: 8px; }
.nav h2 .s { width: 6px; height: 6px; }
.list { flex: 1; min-height: 0; display: flex; flex-direction: column; border: 1px solid #888; background: #fff; }
table { width: 100%; table-layout: fixed; border-collapse: collapse; }
th { height: 8px; text-align: left; font-weight: 400; padding-left: 2px; background: linear-gradient(#f2f2f2, #dedede); border-bottom: 1px solid #bbb; white-space: nowrap; }
th:last-child, td:last-child { width: 23px; padding-left: 1px; border-left: 1px solid #e2e2e2; }
th b { margin-left: 4px; font-size: 4px; }
tbody tr:nth-child(odd) { height: 8px; }
tbody tr:nth-child(even) { height: 7px; background: #f3f3f3; }
.r { display: flex; align-items: center; height: 7px; white-space: nowrap; color: #444; }
.r svg { width: 6px; height: 6px; margin-right: 1px; }
.r .e { width: 4px; height: 4px; margin: 0 2px 0 1px; font: 4px/4px "DejaVu Sans", sans-serif; text-align: center; background: #ddd; }
.r .e:empty { background: none; }
.r.c { margin-left: 10px; padding-left: 3px; border-left: 1px solid #ddd; }
.r.off { color: #a9a9a9; }
.rest { flex: 1; background: repeating-linear-gradient(#f3f3f3 0 7px, #fff 7px 15px); border-right: 1px solid #eee; }
.hs { flex: none; display: flex; align-items: center; gap: 2px; height: 6px; padding: 0 2px; background: #e6e6e6; font-size: 4px; }
.hs i { flex: 0 0 81px; height: 5px; border: 1px solid #aaa; border-radius: 2px; background: #d6d6d6; }
.hs b:last-child { margin-left: auto; }
.grip { flex: none; align-self: center; width: 20px; height: 1px; margin: 3px 0 4px; background: #999; }

.view { position: relative; flex: 1; min-width: 0; overflow: hidden; background: linear-gradient(#2a2b2d, #3c3d3f 35%, #545557 80%, #58595b); }
.scene { width: 100%; height: 100%; }
.pop { position: absolute; left: 233px; top: 56px; display: flex; align-items: center; height: 13px; padding: 1px 3px 1px 1px; gap: 1px; background: #e2e2e2; border: 1px solid #c8c8c8; border-left: 3px double #999; }
.pop i { width: 1px; }
.pop button { width: 8px; height: 8px; border: 1px solid #bbb; background: #fff; }
.pop button svg { width: 6px; height: 6px; }
.pop label { margin-left: 1px; }
.pop input { width: 18px; height: 7px; padding-left: 1px; border: 1px solid #888; background: #fff; }

.dlg { position: absolute; left: 390px; top: 51px; width: 114px; padding: 0 2px 2px; background: #232426; border-radius: 2px; box-shadow: 0 0 2px #111; }
.dlg header { display: flex; align-items: center; gap: 3px; height: 9px; padding: 0 1px; color: #fff; }
.dlg header svg { width: 6px; height: 6px; }
.dlg header h2 { flex: 1; color: #d8d8d8; padding-left: 2px; }
.body { padding: 1px 1px 2px; background: #d8d8d8; }
.dlg h3 { display: flex; align-items: center; justify-content: space-between; height: 8px; padding: 0 2px; margin-bottom: 1px; background: linear-gradient(#f4f4f4, #dcdcdc); border-bottom: 1px solid #c2c2c2; color: #444; }
.dlg h3 svg { width: 5px; height: 5px; }
.grp { padding: 2px 3px; background: #cfcfcf; }
.cur { display: flex; align-items: center; gap: 2px; height: 13px; padding: 0 1px; border-radius: 2px; background: linear-gradient(90deg, #e6a264, #e3b287 60%, #dcc7b2); }
.cur > svg { width: 6px; height: 6px; }
.cur span { flex: 1; }
.cur button { width: 9px; height: 9px; border: 1px solid #888; background: #e4e4e4; }
.cur button svg { width: 7px; height: 7px; }
.cur .hot { width: 11px; height: 11px; background: #f8cbaa; border-color: #d07040; }
.cur .hot svg { width: 9px; height: 9px; }
.vecs { background: none; gap: 1px; height: 14px; }
.cur > .ar { height: 9px; width: 6px; margin-left: -1px; }
.fields { display: grid; grid-template-columns: 1fr 49px; row-gap: 2px; align-items: center; padding: 2px 2px 2px 3px; }
.fields .sel { border-color: #999; }
.num { display: flex; align-items: center; height: 8px; border: 1px solid #999; background: #d8d8d8; }
.num input { width: 25px; height: 6px; padding-left: 2px; background: #fff; }
.num span { flex: 1; text-align: center; }
.act input { padding-left: 0; color: #fff; background: linear-gradient(90deg, #4b9bf5 7px, #fff 7px); }
.wide { grid-column: 1 / -1; display: flex; align-items: center; gap: 1px; height: 7px; }
.wide input { width: 5px; height: 5px; border: 1px solid #777; background: #e4e4e4; }
.bool { padding-top: 4px; padding-bottom: 4px; }
.dlg footer { display: flex; justify-content: flex-end; gap: 3px; padding: 3px 4px 1px; }
.dlg footer button { width: 25px; height: 8px; border: 1px solid #888; border-radius: 2px; background: #e6e6e6; }
.dlg footer .ok { border-color: #3c9c30; background: linear-gradient(#b4f09c, #74d45c); }

.sk { height: 13px; padding-left: 131px; border-top: 1px solid #eee; }
.asm { height: 13px; background: linear-gradient(#d2d2d2, #c8c8c8); }
.dis { color: #999; }
```
